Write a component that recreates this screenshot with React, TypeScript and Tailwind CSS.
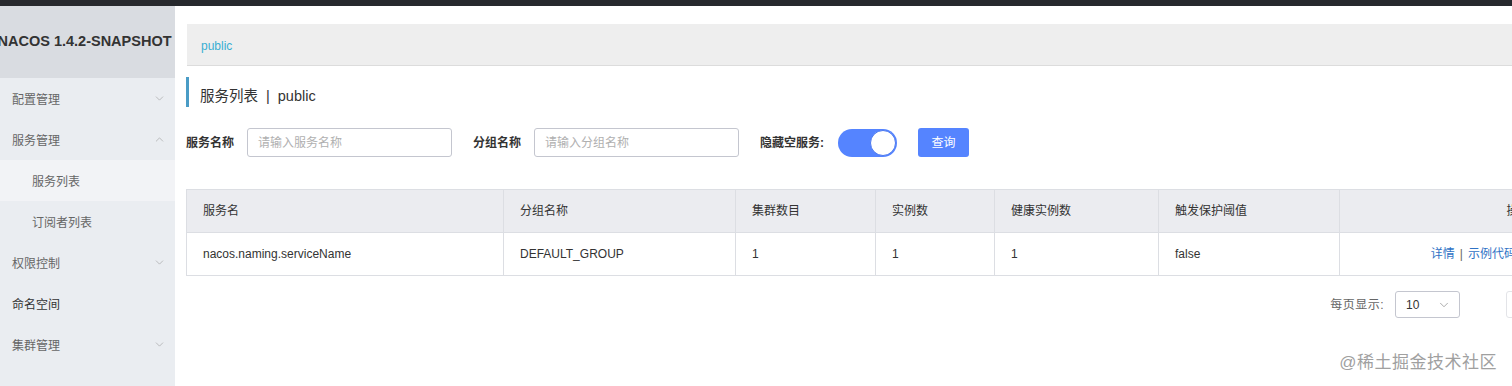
import React from 'react';
import { ChevronDown, ChevronUp, ChevronLeft, ChevronRight } from 'lucide-react';

const font = { fontFamily: '"Liberation Sans", "Noto Sans CJK SC", sans-serif' };

interface MenuItem {
  label: string;
  sub?: boolean;
  arrow?: 'down' | 'up';
  active?: boolean;
  strong?: boolean;
}

const menu: MenuItem[] = [
  { label: '配置管理', arrow: 'down' },
  { label: '服务管理', arrow: 'up' },
  { label: '服务列表', sub: true, active: true },
  { label: '订阅者列表', sub: true },
  { label: '权限控制', arrow: 'down' },
  { label: '命名空间', strong: true },
  { label: '集群管理', arrow: 'down' },
];

const columns = [
  { title: '服务名', w: 'w-[316px]' },
  { title: '分组名称', w: 'w-[232px]' },
  { title: '集群数目', w: 'w-[140px]' },
  { title: '实例数', w: 'w-[119px]' },
  { title: '健康实例数', w: 'w-[164px]' },
  { title: '触发保护阈值', w: 'w-[181px]' },
  { title: '操作', w: 'w-[358px]', center: true },
];

const row = ['nacos.naming.serviceName', 'DEFAULT_GROUP', '1', '1', '1', 'false'];

function Sidebar() {
  return (
    <aside className="w-[175px] shrink-0 bg-[#eaedf1] flex flex-col">
      <div className="h-[72px] bg-[#d9dce1] flex items-center justify-center overflow-hidden pr-[6px]">
        <span className="whitespace-nowrap text-[14.5px] font-bold text-[#333] shrink-0">NACOS 1.4.2-SNAPSHOT</span>
      </div>
      {menu.map((m) => (
        <div
          key={m.label}
          className={`h-[41px] flex items-center justify-between pr-[9px] text-[12px] ${m.sub ? 'pl-[32px]' : 'pl-[12px]'} ${m.active ? 'bg-[#f2f3f6]' : ''} ${m.strong ? 'text-[#333]' : 'text-[#666]'}`}
        >
          <span className="pt-[2px]">{m.label}</span>
          {m.arrow === 'down' && <ChevronDown size={13} strokeWidth={1.1} className="text-[#999]" />}
          {m.arrow === 'up' && <ChevronUp size={13} strokeWidth={1.1} className="text-[#999]" />}
        </div>
      ))}
    </aside>
  );
}

function SearchBar() {
  return (
    <div className="flex items-center mt-[21px] text-[12px]">
      <span className="font-bold text-[#333]">服务名称</span>
      <div className="ml-[13px] w-[205px] h-[29px] border border-[#c4c6cf] rounded-[3px] flex items-center pl-[10px] text-[#b0b0b0]">
        请输入服务名称
      </div>
      <span className="ml-[21px] font-bold text-[#333]">分组名称</span>
      <div className="ml-[13px] w-[205px] h-[29px] border border-[#c4c6cf] rounded-[3px] flex items-center pl-[10px] text-[#b0b0b0]">
        请输入分组名称
      </div>
      <span className="ml-[21px] font-bold text-[#333]">隐藏空服务:</span>
      <div className="ml-[14px] w-[59px] h-[28px] rounded-full bg-[#5584ff] flex items-center justify-end pr-[1px]">
        <div className="w-[26px] h-[26px] rounded-full bg-white border border-[#4a78f0]" />
      </div>
      <button className="ml-[21px] w-[51px] h-[29px] rounded-[3px] bg-[#5584ff] text-white text-[12px]">查询</button>
    </div>
  );
}

function ServiceTable() {
  return (
    <div className="mt-[32px] w-[1510px] border border-[#dcdee3] text-[12px] text-[#333]">
      <div className="flex h-[43px] bg-[#ebecf0] border-b border-[#dcdee3]">
        {columns.map((c, i) => (
          <div
            key={c.title}
            className={`${c.w} shrink-0 flex items-center px-[16px] ${i > 0 ? 'border-l border-[#dcdee3]' : ''} ${c.center ? 'justify-center' : ''}`}
          >
            {c.title}
          </div>
        ))}
      </div>
      <div className="flex h-[42px] bg-white">
        {row.map((v, i) => (
          <div
            key={i}
            className={`${columns[i].w} shrink-0 flex items-center px-[16px] ${i > 0 ? 'border-l border-[#dcdee3]' : ''}`}
          >
            {v}
          </div>
        ))}
        <div className="w-[358px] shrink-0 flex items-center justify-center border-l border-[#dcdee3] whitespace-nowrap pr-[4px]">
          <span className="text-[#2f72c5]">详情</span>
          <span className="mx-[5px] text-[#666]">|</span>
          <span className="text-[#2f72c5]">示例代码</span>
          <span className="mx-[5px] text-[#666]">|</span>
          <span className="text-[#2f72c5]">订阅者</span>
          <span className="mx-[5px] text-[#666]">|</span>
          <span className="text-[#2f72c5]">删除</span>
        </div>
      </div>
    </div>
  );
}

function Pager() {
  return (
    <div className="w-[1510px] mt-[15px] flex items-center justify-end text-[12px]">
      <span className="text-[#666] tracking-[0.5px]">每页显示:</span>
      <div className="ml-[11px] w-[65px] h-[27px] border border-[#c4c6cf] rounded-[3px] flex items-center justify-between pl-[10px] pr-[8px] text-[#333]">
        <span>10</span>
        <ChevronDown size={14} strokeWidth={1.2} className="text-[#888]" />
      </div>
      <div className="ml-[46px] w-[190px] h-[27px] flex items-center gap-[4px]">
        <div className="h-[27px] px-[10px] border border-[#e3e4e8] rounded-[3px] flex items-center text-[#bbb]">
          <ChevronLeft size={12} />上一页
        </div>
        <div className="h-[27px] w-[28px] border border-[#5584ff] bg-[#5584ff] rounded-[3px] flex items-center justify-center text-white">1</div>
        <div className="h-[27px] px-[10px] border border-[#e3e4e8] rounded-[3px] flex items-center text-[#bbb]">
          下一页<ChevronRight size={12} />
        </div>
      </div>
    </div>
  );
}

export default function App() {
  return (
    <div className="relative w-[1512px] h-[386px] overflow-hidden bg-white flex flex-col" style={font}>
      <div className="h-[6px] shrink-0 bg-[#27292d]" />
      <div className="flex flex-1 min-h-0">
        <Sidebar />
        <main className="flex-1 min-w-0 overflow-hidden pl-[11px] pt-[18px]">
          <div className="ml-[1px] h-[42px] bg-[#eeeeee] border-b border-[#dcdcdc] flex items-center pl-[14px] pt-[2px] text-[12px] text-[#3aaed3]">
            public
          </div>
          <div className="mt-[11px] h-[30px] flex items-center border-l-[3px] border-[#4a9cc6] pl-[11px] pt-[9px] text-[14.5px] text-[#333]">
            服务列表<span className="mx-[8px]">|</span>public
          </div>
          <SearchBar />
          <ServiceTable />
          <Pager />
        </main>
      </div>
      <div className="absolute right-[15px] bottom-[11px] text-[17px] text-[#a0a0a0] tracking-[0.5px]">@稀土掘金技术社区</div>
    </div>
  );
}
